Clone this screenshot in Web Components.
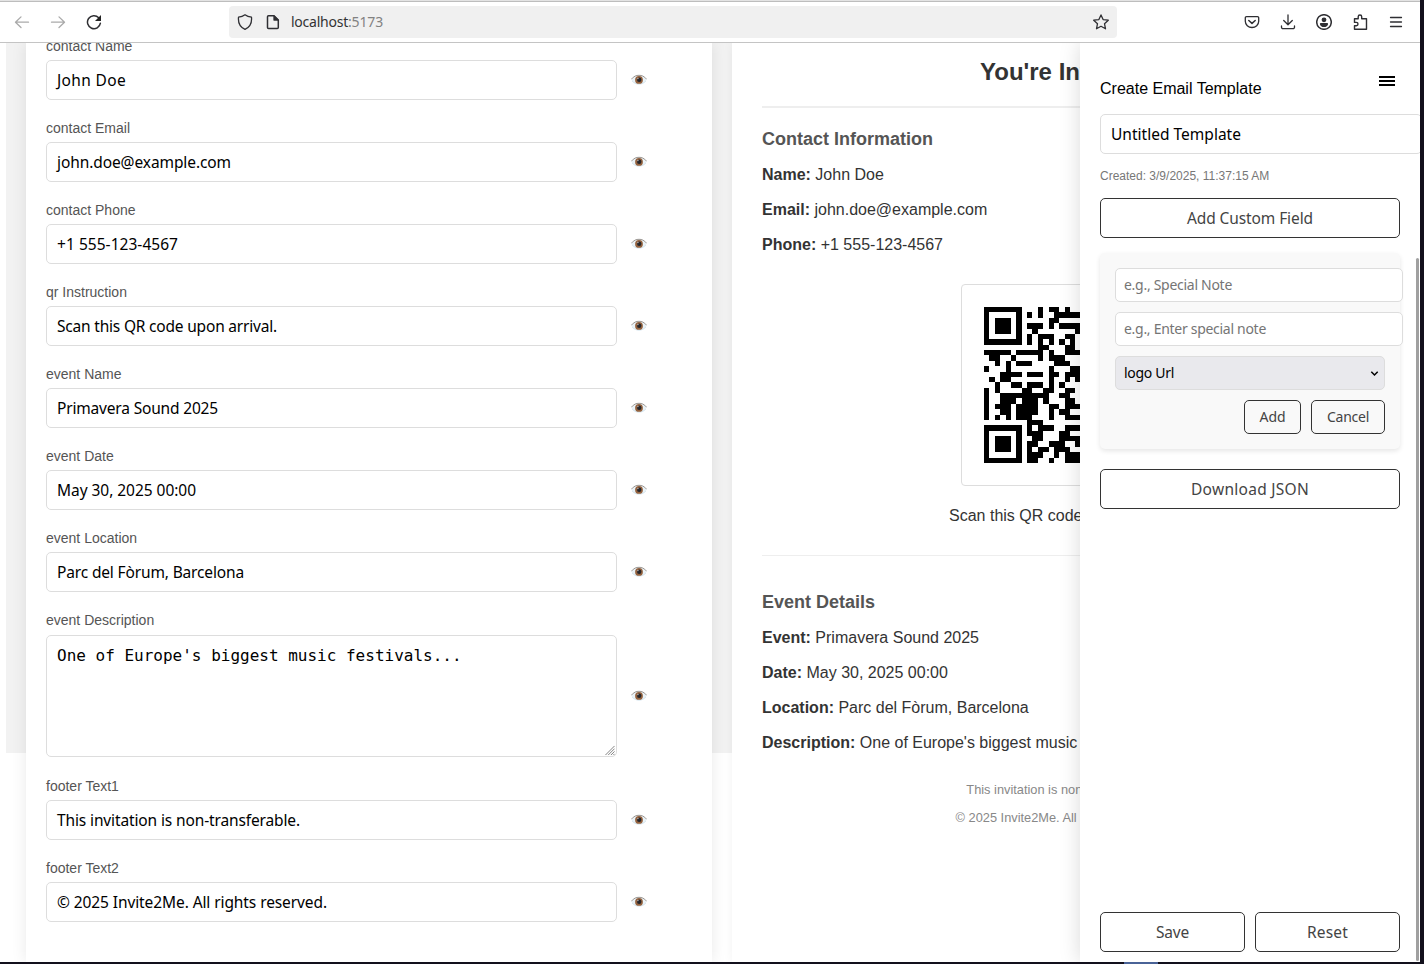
<!DOCTYPE html>
<html lang="en">
<head>
<meta charset="utf-8">
<title>Email Template Editor</title>
<style>
html,body{margin:0;height:100%;overflow:hidden}
body{background:#12101c;font-family:"Liberation Sans",Arial,sans-serif;color:#333}
</style>
</head>
<body>
<desktop-window></desktop-window>
<script>
const define = (name, html, setup) => customElements.define(name, class extends HTMLElement {
  connectedCallback() {
    if (this.shadowRoot) return;
    const root = this.attachShadow({mode: 'open'});
    const t = document.createElement('template');
    t.innerHTML = typeof html === 'function' ? html(this) : html;
    root.append(t.content.cloneNode(true));
    if (setup) setup(this, root);
  }
});

/* Text in the interface face, tracked to a given advance width. */
define('ui-text', el => `<style>:host{display:inline-block;white-space:pre;font-family:"Noto Sans","Open Sans",sans-serif;font-size:15.5px}</style><span>${el.getAttribute('text')}</span>`,
  (el, root) => {
    const s = root.querySelector('span');
    const w = +el.getAttribute('w');
    const n = s.textContent.length;
    if (w) s.style.letterSpacing = ((w - s.getBoundingClientRect().width) / n) + 'px';
  });

define('tool-bar', `<style>
:host{display:block;background:#fff;border-top:1px solid #e3e3e3;height:42px;box-sizing:border-box}
.bar{display:flex;align-items:center;height:40px;border-top:1px solid #bdbdbd;border-bottom:1px solid #c4c4c4;padding:0 16px 0 14px;box-sizing:content-box}
svg{display:block;width:16px;height:16px;fill:none;stroke:#2f2f33;stroke-width:1.3;stroke-linecap:round;stroke-linejoin:round;flex:none}
.nav{display:flex;gap:20px;width:215px}
.dim{stroke:#aaa}
.url{display:flex;align-items:center;width:888px;height:32px;background:#f0f0f0;border-radius:4px;padding:0 8px;box-sizing:border-box}
.url svg+svg{margin:0 10px 0 12px}
.url .star{margin-left:auto}
ui-text{font-size:14px;color:#333;margin-top:-2px}
.port{color:#828282}
.tools{display:flex;gap:20px;margin-left:auto}
</style>
<div class="bar">
<div class="nav">
<svg class="dim" viewBox="0 0 16 16"><path d="M14.5 8.2H1.5M7 2.9 1.5 8.2 7 13.5"/></svg>
<svg class="dim" viewBox="0 0 16 16"><path d="M1.5 8.2h13M9 2.9l5.500 5.300L9 13.500"/></svg>
<svg viewBox="0 0 16 16"><path stroke-width="1.5" d="M14.400 9.200A6.500 6.500 0 1 1 12.700 3.700"/><path fill="#222" stroke="none" d="M15 1v6H9z"/></svg>
</div>
<div class="url">
<svg viewBox="0 0 16 16"><path d="M8 .8C6 2.300 3.500 3 1.500 3.200 1 8.500 3 13 8 15.300 13 13 15 8.500 14.500 3.200 12.500 3 10 2.300 8 .8z"/></svg>
<svg viewBox="0 0 16 16"><path stroke-width="1.5" d="M3.500 1.800H9l4.300 4.300v7.400a1 1 0 0 1-1 1H3.500a1 1 0 0 1-1-1V2.800a1 1 0 0 1 1-1z"/><path fill="#333" d="M9 2v4h4z"/></svg>
<ui-text text="localhost" w="57"></ui-text><ui-text class="port" text=":5173" w="35"></ui-text>
<svg class="star" viewBox="0 0 16 16"><path d="m8 .9 2.100 4.700 5.200.6-3.800 3.500 1 5.100L8 12.300l-4.500 2.500 1-5.100L.7 6.200l5.200-.6z"/></svg>
</div>
<div class="tools">
<svg viewBox="0 0 16 16"><path d="M2.500 2.700h11a1.200 1.200 0 0 1 1.200 1.200v3.400a6.700 6.200 0 0 1-13.400 0V3.900a1.200 1.200 0 0 1 1.200-1.200z"/><path stroke-width="1.500" d="M4.800 6.500 8 9.400l3.200-2.900"/></svg>
<svg viewBox="0 0 16 16"><path d="M8 1v9.500M3.700 6.500 8 10.700l4.300-4.200M1.500 12v1.200a1.500 1.500 0 0 0 1.500 1.500h10a1.500 1.500 0 0 0 1.500-1.500V12"/></svg>
<svg viewBox="0 0 16 16"><circle cx="8" cy="8" r="7.300" stroke-width="1.500"/><circle cx="8" cy="5.800" r="2.400" fill="#2f2f33" stroke="none"/><path fill="#2f2f33" stroke="none" d="M4.800 9h6.400a.9.9 0 0 1 .9.900C12 12 10 13 8 13s-4-1-4.100-3.100a.9.9 0 0 1 .9-.9z"/></svg>
<svg viewBox="0 0 16 16"><path stroke-width="1.400" d="M2.500 7.200V4.700h3.700V2.800a1.700 1.700 0 0 1 3.500 0v1.900h4.800v10.500h-12v-3.400h1.800a1.700 1.700 0 0 0 0-3.400H2.500z"/></svg>
<svg viewBox="0 0 16 16"><path d="M2.500 3.500h11M2.500 8h11M2.500 12.500h11"/></svg>
</div></div>`);

define('eye-icon', `<style>:host{display:block;width:16px;height:11px}svg{display:block}</style>
<svg width="16" height="11" viewBox="0 0 16 11"><path d="M.4 5.800C3 1.900 5.500 1.500 8 1.500s5 .5 7.600 4.300C13.500 9 11 10.200 8 10.200S2.500 9 .4 5.800z" fill="#eaf3f8"/><path d="M.3 5.300C3 2 5.300 1.300 8 1.300s5 .7 7.700 4" fill="none" stroke="#8f8983" stroke-width=".9"/><path d="M1 6.800c2 2.300 4 3.300 7 3.300s5-1 7-3.300" fill="none" stroke="#c3dbe8" stroke-width=".7"/><circle cx="8" cy="5.900" r="3.900" fill="#94623e"/><circle cx="8.200" cy="5.700" r="2.200" fill="#23262c"/><circle cx="6.900" cy="4.500" r=".7" fill="#c4b8b3"/></svg>`);

define('form-field', el => {
  const area = el.hasAttribute('area');
  return `<style>
:host{display:block;margin-bottom:20px}
label{display:block;font-size:14px;line-height:16px;color:#555;margin-bottom:6px}
.row{display:flex;align-items:center;gap:14px}
.box{width:571px;height:40px;box-sizing:border-box;border:1px solid #ddd;border-radius:5px;background:#fff;color:#000;padding:0 10px;display:flex;align-items:center}
.box:not(.area)+eye-icon{margin-bottom:2px}
.area{height:122px;align-items:flex-start;justify-content:space-between;font:16px/19px "DejaVu Sans Mono",monospace;padding:10px 1px 0 10px;margin-top:1px}
.area svg{align-self:flex-end}
:host([area]){margin-bottom:21px}
</style><label>${el.getAttribute('label')}</label><div class="row">${area
  ? `<div class="box area"><span>${el.getAttribute('value')}</span><svg width="10" height="11" viewBox="0 0 11 11" stroke="#777" stroke-width="1" fill="none"><path d="M.5 10.500l10-10M3.500 10.500l7-7M6.500 10.500l4-4M9.200 10.500l1.300-1.300"/></svg></div>`
  : `<div class="box"><ui-text text="${el.getAttribute('value')}" w="${el.getAttribute('w')}"></ui-text></div>`}<eye-icon></eye-icon></div>`;
});

define('edit-form', `<style>
:host{display:block;background:#fff;width:686px;height:919px;box-sizing:border-box;padding:0 20px;box-shadow:0 0 15px rgba(0,0,0,.09)}
.scroll{margin-top:-5px}
</style><div class="scroll">
<form-field label="contact Name" value="John Doe" w="69"></form-field>
<form-field label="contact Email" value="john.doe@example.com" w="174"></form-field>
<form-field label="contact Phone" value="+1 555-123-4567" w="121"></form-field>
<form-field label="qr Instruction" value="Scan this QR code upon arrival." w="220"></form-field>
<form-field label="event Name" value="Primavera Sound 2025" w="161"></form-field>
<form-field label="event Date" value="May 30, 2025 00:00" w="139"></form-field>
<form-field label="event Location" value="Parc del Fòrum, Barcelona" w="187"></form-field>
<form-field area label="event Description" value="One of Europe's biggest music festivals..."></form-field>
<form-field label="footer Text1" value="This invitation is non-transferable." w="243"></form-field>
<form-field label="footer Text2" value="© 2025 Invite2Me. All rights reserved." w="270"></form-field>
</div>`);

const QR = [
'XXXXXXX...X.XX.X..',
'X.....X.X.X..XXXXX',
'X.XXX.X.....XX....',
'X.XXX.X.XXX.X.XXXX',
'X.XXX.X..X.......X',
'X.....X.X.XXX..XX.',
'XXXXXXX.X.X.X.X.X.',
'..........XX...XX.',
'XXXXX.XXXXX.X..XXX',
'.XX..X....X.XXX...',
'..X.X.XXX....XXX..',
'X...X.......X...XX',
'...XXXX.XXX.XX.XXX',
'.X.XX.......X..X.X',
'..X..XX.XXX.X.X...',
'X.X....XX..XX..XX.',
'X..XXXXXXXXX..XX..',
'X..XXX.XXX.X...XX.',
'X.XXX.XXXX..XX.XXX',
'X..XX.XXXX..X.XX..',
'X.X.X.XXX...X..XXX',
'........XXX.......',
'XXXXXXX.X.XXX..XXX',
'X.....X.XXX...XX..',
'X.XXX.X..XX...XXXX',
'X.XXX.X.XX..XXX..X',
'X.XXX.X.X.XX.XXX..',
'X.....X.XXX..X.XXX',
'XXXXXXX.XX..X..XXX'];
define('qr-code', () => {
  let d = '';
  QR.forEach((r, y) => [...(r + r.slice(0, 11))].forEach((c, x) => { if (c === 'X') d += `M${x} ${y}h1v1h-1z`; }));
  return `<style>:host{display:flex;width:202px;height:202px;box-sizing:border-box;border:1px solid #ddd;border-radius:4px;align-items:center;justify-content:center}</style>
<svg width="156" height="156" viewBox="0 0 29 29" shape-rendering="crispEdges"><path d="${d}"/></svg>`;
});

define('invite-preview', `<style>
:host{display:block;background:#fff;width:660px;height:919px;box-sizing:border-box;padding:15px 30px 0;box-shadow:0 0 10px rgba(0,0,0,.05)}
h2{font-size:24px;line-height:28px;margin:0;text-align:center;padding-bottom:20px;border-bottom:2px solid #eee}
h3{font-size:18px;line-height:20px;margin:0 0 16px;color:#555}
section{padding-top:21px}
p{font-size:16px;line-height:19px;margin:0 0 16px}
qr-code{margin:30px auto 20px}
.cap{text-align:center;margin-bottom:30px;line-height:19px}
.event{border-top:1px solid #eee;padding-top:36px}
.foot{text-align:center;font-size:12.8px;color:#888;line-height:15px;margin:0 0 13px}
.first{margin-top:30px}
</style>
<h2>You're Invited!</h2>
<section><h3>Contact Information</h3>
<p><b>Name:</b> John Doe</p><p><b>Email:</b> john.doe@example.com</p><p><b>Phone:</b> +1 555-123-4567</p></section>
<qr-code></qr-code>
<p class="cap">Scan this QR code upon arrival.</p>
<section class="event"><h3>Event Details</h3>
<p><b>Event:</b> Primavera Sound 2025</p><p><b>Date:</b> May 30, 2025 00:00</p><p><b>Location:</b> Parc del Fòrum, Barcelona</p><p><b>Description:</b> One of Europe's biggest music festivals...</p></section>
<p class="foot first">This invitation is non-transferable.</p>
<p class="foot">© 2025 Invite2Me. All rights reserved.</p>`);

define('line-button', `<style>
:host{display:flex;align-items:center;justify-content:center;height:40px;box-sizing:border-box;border:1px solid #333;border-radius:5px;color:#444}
:host([small]){height:34px}
</style><slot></slot>`);

define('field-card', `<style>
:host{display:flex;flex-direction:column;gap:10px;height:196px;box-sizing:border-box;padding:15px;background:#f9f9f9;border-radius:5px;box-shadow:0 2px 5px rgba(0,0,0,.1)}
ui-text{font-size:14px;margin-top:-2px}
.in{width:288px;height:34px;box-sizing:border-box;border:1px solid #ddd;border-radius:5px;background:#fff;color:#757575;padding:0 8px;display:flex;align-items:center}
.sel{width:270px;background:#e9e9ed;color:#000;justify-content:space-between;padding-right:5px}
.act{display:flex;gap:10px;justify-content:flex-end}
</style>
<div class="in"><ui-text text="e.g., Special Note" w="108"></ui-text></div>
<div class="in"><ui-text text="e.g., Enter special note" w="142"></ui-text></div>
<div class="in sel"><ui-text text="logo Url" w="50"></ui-text><svg width="9" height="7" viewBox="0 0 9 7" fill="none" stroke="#000" stroke-width="1.500"><path d="M1.300 1.800 4.500 5l3.200-3.200"/></svg></div>
<div class="act"><line-button small style="width:57px"><ui-text text="Add" w="26"></ui-text></line-button><line-button small style="width:74px"><ui-text text="Cancel" w="42"></ui-text></line-button></div>`);

define('template-drawer', `<style>
:host{display:flex;flex-direction:column;background:#fff;width:340px;height:919px;box-sizing:border-box;padding:33px 20px 10px;box-shadow:0 0 20px rgba(0,0,0,.15);color:#000}
.head{display:flex;justify-content:space-between;height:38px;font-size:16px;line-height:26px}
.head svg{margin-right:5px}
.name{width:322px;height:40px;box-sizing:border-box;border:1px solid #ddd;border-radius:5px;padding:0 10px;display:flex;align-items:center}
.made{font-size:12px;line-height:14px;color:#777;margin:15px 0 15px}
field-card{margin:15px 0 20px}
.foot{display:flex;gap:10px;margin-top:auto}
.foot line-button{flex:1}
.bar{position:absolute;right:1px;top:215px;width:3px;bottom:1px;background:#a0a0a0;border-radius:2px}
</style>
<div class="head"><span>Create Email Template</span><svg width="16" height="10" viewBox="0 0 16 10"><path d="M0 0h16v2H0zM0 4h16v2H0zM0 8h16v2H0z"/></svg></div>
<div class="name"><ui-text text="Untitled Template" w="130"></ui-text></div>
<div class="made">Created: 3/9/2025, 11:37:15 AM</div>
<line-button><ui-text text="Add Custom Field" w="126"></ui-text></line-button>
<field-card></field-card>
<line-button><ui-text text="Download JSON" w="118"></ui-text></line-button>
<div class="foot"><line-button><ui-text text="Save" w="33"></ui-text></line-button><line-button><ui-text text="Reset" w="41"></ui-text></line-button></div>
<div class="bar"></div>`);

define('desktop-window', `<style>
:host{display:block;width:1424px;height:964px;overflow:hidden;background:linear-gradient(90deg,transparent 1124px,#4a6397 1124px,#4a6397 1158px,transparent 1158px) 0 962px/100% 2px no-repeat,#12101c}
.win{width:1420px;height:962px;background:#fff;overflow:hidden}
tool-bar{height:43px}
.page{position:relative;display:flex;gap:20px;height:919px;overflow:hidden;padding-left:26px;box-sizing:border-box;background:linear-gradient(#f2f2f2,#f2f2f2) 6px 0/1414px 710px no-repeat,#fff}
edit-form,invite-preview{flex:none}
template-drawer{position:absolute;right:0;top:0}
</style>
<div class="win"><tool-bar></tool-bar><div class="page"><edit-form></edit-form><invite-preview></invite-preview><template-drawer></template-drawer></div></div>`);
</script>
</body>
</html>
